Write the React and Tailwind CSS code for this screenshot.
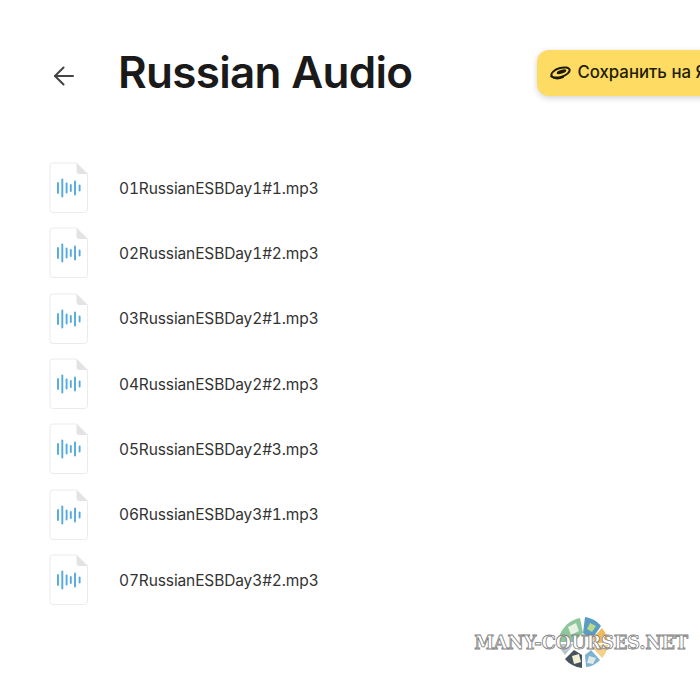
const files = [
  '01RussianESBDay1#1.mp3',
  '02RussianESBDay1#2.mp3',
  '03RussianESBDay2#1.mp3',
  '04RussianESBDay2#2.mp3',
  '05RussianESBDay2#3.mp3',
  '06RussianESBDay3#1.mp3',
  '07RussianESBDay3#2.mp3',
];

function AudioFileIcon() {
  return (
    <svg width="40" height="52" viewBox="0 0 40 52" fill="none" className="shrink-0">
      <path d="M4 1h23.5L38.5 12V47.5a3 3 0 0 1-3 3H4a3 3 0 0 1-3-3V4a3 3 0 0 1 3-3z" fill="#fff" stroke="#ebebeb" />
      <path d="M27.5 1l11 11H30.5a3 3 0 0 1-3-3z" fill="#e3e3e3" />
      <g stroke="#54a9de" strokeWidth="1.9" strokeLinecap="round">
        <path d="M9 21v10" />
        <path d="M13.3 17.5v17" />
        <path d="M17.6 21.5v9" />
        <path d="M21.8 23v6" />
        <path d="M26 19.5v13" />
        <path d="M30.6 23.5v5" />
      </g>
    </svg>
  );
}

function DiskLogo() {
  return (
    <svg width="22" height="14" viewBox="2 0 22 14" fill="none" className="shrink-0">
      <ellipse cx="12.5" cy="6.5" rx="9.5" ry="4.4" transform="rotate(-18 12.5 6.5)" stroke="#1f1a05" strokeWidth="2" />
      <ellipse cx="13.5" cy="5.8" rx="5" ry="1.8" transform="rotate(-18 13.5 5.8)" fill="#1f1a05" />
      <path d="M3 10.5c3 2.4 8 2.6 12 .8" stroke="#1f1a05" strokeWidth="1.6" strokeLinecap="round" />
    </svg>
  );
}

function GlobeMark() {
  return (
    <svg width="54" height="54" viewBox="0 0 52 54" fill="none">
      <path d="M4 17C9 9 14 5 23 3l3 15-9 9H2c0-4 .6-7 2-10z" fill="#8cc69a" />
      <path d="M11 12l8-4 3 8-8 4z" fill="#e8f1e4" />
      <path d="M28 2c7 1 12 4 16 9l-9 13-9-6z" fill="#5b9cc4" />
      <path d="M33 8l6 3-4 6-5-3z" fill="#b9d98d" />
      <path d="M45 13c4 5 6 10 6 15H37l-1-5z" fill="#f0b95a" />
      <path d="M37 30h14c-1 6-3 10-6 13l-9-10z" fill="#f4d08a" />
      <path d="M34 35l9 10c-4 4-9 7-14 7l-1-12z" fill="#7fb3cd" />
      <path d="M32 41l7 2-3 6-6-1z" fill="#dfe9ec" />
      <path d="M25 40v13c-7-1-13-4-17-9l9-9z" fill="#46525c" />
      <path d="M15 41l7-2 2 8-7 2z" fill="#f1efd4" />
      <path d="M3 29h13l-3 5-5 6c-3-3-5-7-5-11z" fill="#b9c6cc" />
    </svg>
  );
}

export default function App() {
  return (
    <div className="relative h-[677px] w-[700px] overflow-hidden bg-white font-['Inter',sans-serif] text-[#1f1f1f]">
      <header className="flex h-[96px] items-start pt-[50px]">
        <button className="ml-[54px] mt-[16px] flex h-[20px] w-[20px] items-center justify-center text-[#444]">
          <svg width="20" height="20" viewBox="0 0 20 20" fill="none" stroke="currentColor" strokeWidth="2" strokeLinecap="round" strokeLinejoin="round">
            <path d="M19 10H1" />
            <path d="M9.5 1.5L1 10l8.5 8.5" />
          </svg>
        </button>
        <h1 className="ml-[44px] mt-[-6px] whitespace-nowrap text-[44px] font-semibold leading-[56px] tracking-[-0.7px] text-[#1a1a1a]">Russian Audio</h1>
        <button className="ml-[125px] flex h-[46px] w-[240px] shrink-0 items-center gap-[5px] rounded-[12px] bg-[#fedb62] pl-[13px] text-[16.8px] font-medium whitespace-nowrap text-[#221c07] shadow-[0_2px_6px_rgba(0,0,0,0.18)]">
          <DiskLogo />
          Сохранить на Яндекс Диск
        </button>
      </header>
      <ul className="mt-[59.5px] flex flex-col">
        {files.map((name) => (
          <li key={name} className="flex h-[65.33px] items-center pl-[49px]">
            <AudioFileIcon />
            <span className="ml-[30px] text-[15.5px] tabular-nums tracking-[-0.12px] text-[#333]">{name}</span>
          </li>
        ))}
      </ul>
      {/* watermark */}
      <div className="absolute left-[474px] top-[615px] flex h-[54px] w-[214px] items-center justify-center">
        <div className="absolute left-[82px] top-0">
          <GlobeMark />
        </div>
        <span className="relative whitespace-nowrap font-['DejaVu_Serif',serif] text-[18px] font-bold tracking-[-0.3px] text-white [-webkit-text-stroke:0.8px_#808080]">MANY-COURSES.NET</span>
      </div>
    </div>
  );
}
